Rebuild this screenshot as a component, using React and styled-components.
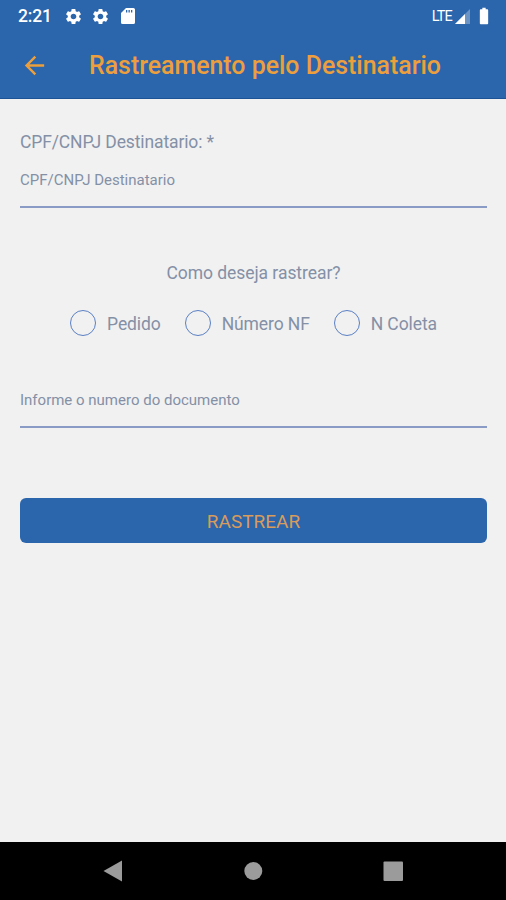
import React, { useState } from 'react'
import styled, { createGlobalStyle } from 'styled-components'
import { MdArrowBack, MdSettings, MdBatteryFull } from 'react-icons/md'

const options = ['Pedido', 'Número NF', 'N Coleta']

function App() {
  const [selected, setSelected] = useState(null)

  return (
    <>
      <GlobalStyle />
      <Screen>
        <StatusBar>
          <Clock>2:21</Clock>
          <Notifications>
            <MdSettings size={19} />
            <MdSettings size={19} />
            <SdCard viewBox="0 0 14 16">
              <path fillRule="evenodd" d="M5 0h7.4Q14 0 14 1.6v12.8Q14 16 12.4 16H1.6Q0 16 0 14.4V5zM5 2v2.6h1.3v-2.6zM7.5 2v2.6h1.3v-2.6zM10 2v2.6h1.3v-2.6z" />
            </SdCard>
          </Notifications>
          <Network>LTE</Network>
          <Signal viewBox="0 0 15 15">
            <path d="M15 0v15H0z" opacity="0.3" />
            <path d="M10 5v10H0z" />
          </Signal>
          <MdBatteryFull size={20} />
        </StatusBar>
        <Header>
          <BackButton aria-label="Voltar">
            <MdArrowBack size={29} />
          </BackButton>
          <Title>Rastreamento pelo Destinatario</Title>
        </Header>
        <Content>
          <Label htmlFor="cpf">CPF/CNPJ Destinatario: *</Label>
          <Input id="cpf" placeholder="CPF/CNPJ Destinatario" />
          <Question>Como deseja rastrear?</Question>
          <Options>
            {options.map((name) => (
              <Option key={name} onClick={() => setSelected(name)}>
                <Radio $active={selected === name} />
                <OptionText>{name}</OptionText>
              </Option>
            ))}
          </Options>
          <Input placeholder="Informe o numero do documento" />
          <Button>RASTREAR</Button>
        </Content>
        <NavBar>
          <NavIcon viewBox="0 0 20 22"><path d="M19 0.5v21L0.5 11z" /></NavIcon>
          <NavIcon viewBox="0 0 20 22"><circle cx="10.3" cy="11" r="9" /></NavIcon>
          <NavIcon viewBox="0 0 20 22"><rect x="0.5" y="1.5" width="19.5" height="19.5" rx="1" /></NavIcon>
        </NavBar>
      </Screen>
    </>
  )
}

const GlobalStyle = createGlobalStyle`
  * {
    box-sizing: border-box;
  }
  body {
    margin: 0;
    font-family: Roboto, "Liberation Sans", sans-serif;
  }
`

const Screen = styled.div`
  display: flex;
  flex-direction: column;
  width: 506px;
  height: 900px;
  overflow: hidden;
  background: #f1f1f1;
  color: #8490a6;
`

const StatusBar = styled.div`
  display: flex;
  align-items: center;
  height: 32px;
  padding: 0 12px 0 18px;
  background: #2b65ab;
  color: #fff;
`

const Clock = styled.span`
  width: 46px;
  font-size: 17.5px;
  font-weight: 500;
  letter-spacing: -0.2px;
`

const Notifications = styled.div`
  display: flex;
  align-items: center;
  gap: 8px;
  flex: 1;
`

const SdCard = styled.svg`
  width: 14px;
  height: 16px;
  margin-left: 3px;
  fill: currentColor;
`

const Network = styled.span`
  margin-right: 3px;
  font-size: 14.5px;
  letter-spacing: -0.8px;
`

const Signal = styled.svg`
  width: 15px;
  height: 15px;
  margin-right: 4px;
  fill: currentColor;
`

const Header = styled.header`
  display: flex;
  align-items: center;
  height: 67px;
  padding: 0 20px;
  background: #2b65ab;
  border-bottom: 1px solid #1c5296;
  color: #ec9f3c;
`

const BackButton = styled.button`
  display: flex;
  width: 69px;
  padding: 0;
  border: 0;
  background: none;
  color: inherit;
`

const Title = styled.h1`
  margin: 0;
  font-size: 24.9px;
  font-weight: 500;
  white-space: nowrap;
`

const Content = styled.main`
  display: flex;
  flex-direction: column;
  flex: 1;
  padding: 32px 19px 0 20px;
`

const Label = styled.label`
  font-size: 17.5px;
  line-height: 22px;
  letter-spacing: -0.13px;
`

const Input = styled.input`
  height: 55px;
  padding: 0;
  border: 0;
  border-bottom: 2px solid #8a9bc5;
  outline: 0;
  background: none;
  color: inherit;
  font-family: inherit;
  font-size: 15px;

  &::placeholder {
    color: #8490a6;
    opacity: 1;
  }
`

const Question = styled.p`
  margin: 54px 0 26px;
  font-size: 17.5px;
  line-height: 22px;
  letter-spacing: -0.05px;
  text-align: center;
`

const Options = styled.div`
  display: flex;
  justify-content: center;
  gap: 24px;
  margin-bottom: 37px;
`

const Option = styled.div`
  display: flex;
  align-items: center;
  gap: 11px;
  font-size: 17.5px;
  line-height: 26px;
`

const OptionText = styled.span`
  padding-top: 2px;
  line-height: 24px;
  letter-spacing: -0.1px;
`

const Radio = styled.span`
  width: 26px;
  height: 26px;
  border: 1px solid #5a80c4;
  border-radius: 50%;
  box-shadow: ${({ $active }) => ($active ? 'inset 0 0 0 6px #f1f1f1' : 'none')};
  background: ${({ $active }) => ($active ? '#2b65ab' : 'transparent')};
`

const Button = styled.button`
  height: 45px;
  margin-top: 70px;
  padding: 2px 0 0;
  border: 0;
  border-radius: 6px;
  background: #2b65ab;
  color: #d99c5b;
  font-family: inherit;
  font-size: 19px;
`

const NavBar = styled.nav`
  display: flex;
  align-items: center;
  justify-content: center;
  gap: 120px;
  height: 58px;
  background: #000;
`

const NavIcon = styled.svg`
  width: 20px;
  height: 22px;
  fill: #9b9b9b;
`

export default App
